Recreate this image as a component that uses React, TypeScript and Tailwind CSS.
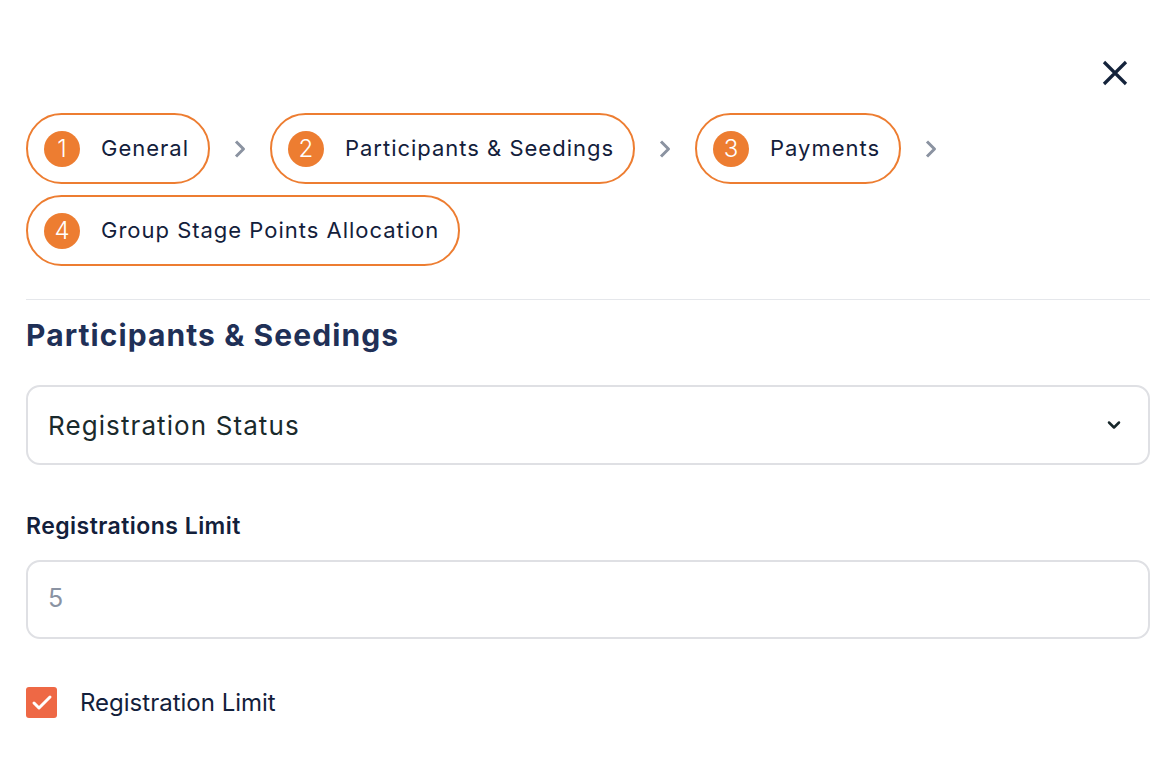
import { Check, ChevronDown } from 'lucide-react';

const steps = ['General', 'Participants & Seedings', 'Payments', 'Group Stage Points Allocation'];

function StepPill({ n, label }: { n: number; label: string }) {
  return (
    <div className="flex h-[71px] items-center rounded-full border-2 border-[#ed7d31] pl-4 pr-[19px]">
      <span className="flex h-9 w-9 items-center justify-center rounded-full bg-[#ed7d31] text-[24px] font-light text-white">
        {n}
      </span>
      <span className="ml-[21px] text-[22px] tracking-[0.045em] text-[#13203b]">{label}</span>
    </div>
  );
}

function Chevron() {
  return (
    <svg width="12" height="20" viewBox="0 0 12 20" fill="none" className="text-[#8b93a1]">
      <path d="M2 2.5 L9.5 10 L2 17.5" stroke="currentColor" strokeWidth="3" strokeLinejoin="round" />
    </svg>
  );
}

export default function App() {
  return (
    <div
      className="min-h-screen bg-white px-[26px]"
      style={{ fontFamily: 'Inter, "Noto Sans", sans-serif' }}
    >
      <div className="flex justify-end pt-[60px] pr-[22px]">
        <svg width="26" height="26" viewBox="0 0 26 26" fill="none" className="text-[#14233b]">
          <path d="M2 2 L24 24 M24 2 L2 24" stroke="currentColor" strokeWidth="3.2" />
        </svg>
      </div>

      <div className="mt-[27px] flex flex-wrap items-center gap-x-6 gap-y-[11px]">
        {steps.map((s, i) => (
          <div key={s} className="flex items-center gap-6">
            <StepPill n={i + 1} label={s} />
            {i < 3 ? <Chevron /> : null}
          </div>
        ))}
      </div>

      <div className="mt-[33px] border-t border-[#e5e7eb]" />

      <h1 className="mt-[13px] text-[30px] font-bold tracking-[0.036em] text-[#1f3057]">
        Participants &amp; Seedings
      </h1>

      <div className="mt-[27px] flex h-[80px] items-center justify-between rounded-[14px] border-2 border-[#dfe0e4] pl-5 pr-6">
        <span className="text-[26px] tracking-[0.042em] text-[#1a2a2c]">Registration Status</span>
        <ChevronDown className="h-5 w-5 text-[#17272a]" strokeWidth={3} />
      </div>

      <div className="mt-[44px] text-[23px] font-semibold tracking-[0.02em] text-[#13203b]">
        Registrations Limit
      </div>

      <div className="mt-[16px] flex h-[79px] items-center rounded-[14px] border-2 border-[#dfe0e4] pl-5">
        <span className="text-[25px] text-[#8a93a3]">5</span>
      </div>

      <label className="mt-[46px] flex items-center gap-[23px]">
        <span className="flex h-[31px] w-[31px] items-center justify-center rounded-[3px] bg-[#ee6845]">
          <Check className="h-6 w-6 text-white" strokeWidth={3} />
        </span>
        <span className="text-[24px] text-[#13203b]">Registration Limit</span>
      </label>
    </div>
  );
}
